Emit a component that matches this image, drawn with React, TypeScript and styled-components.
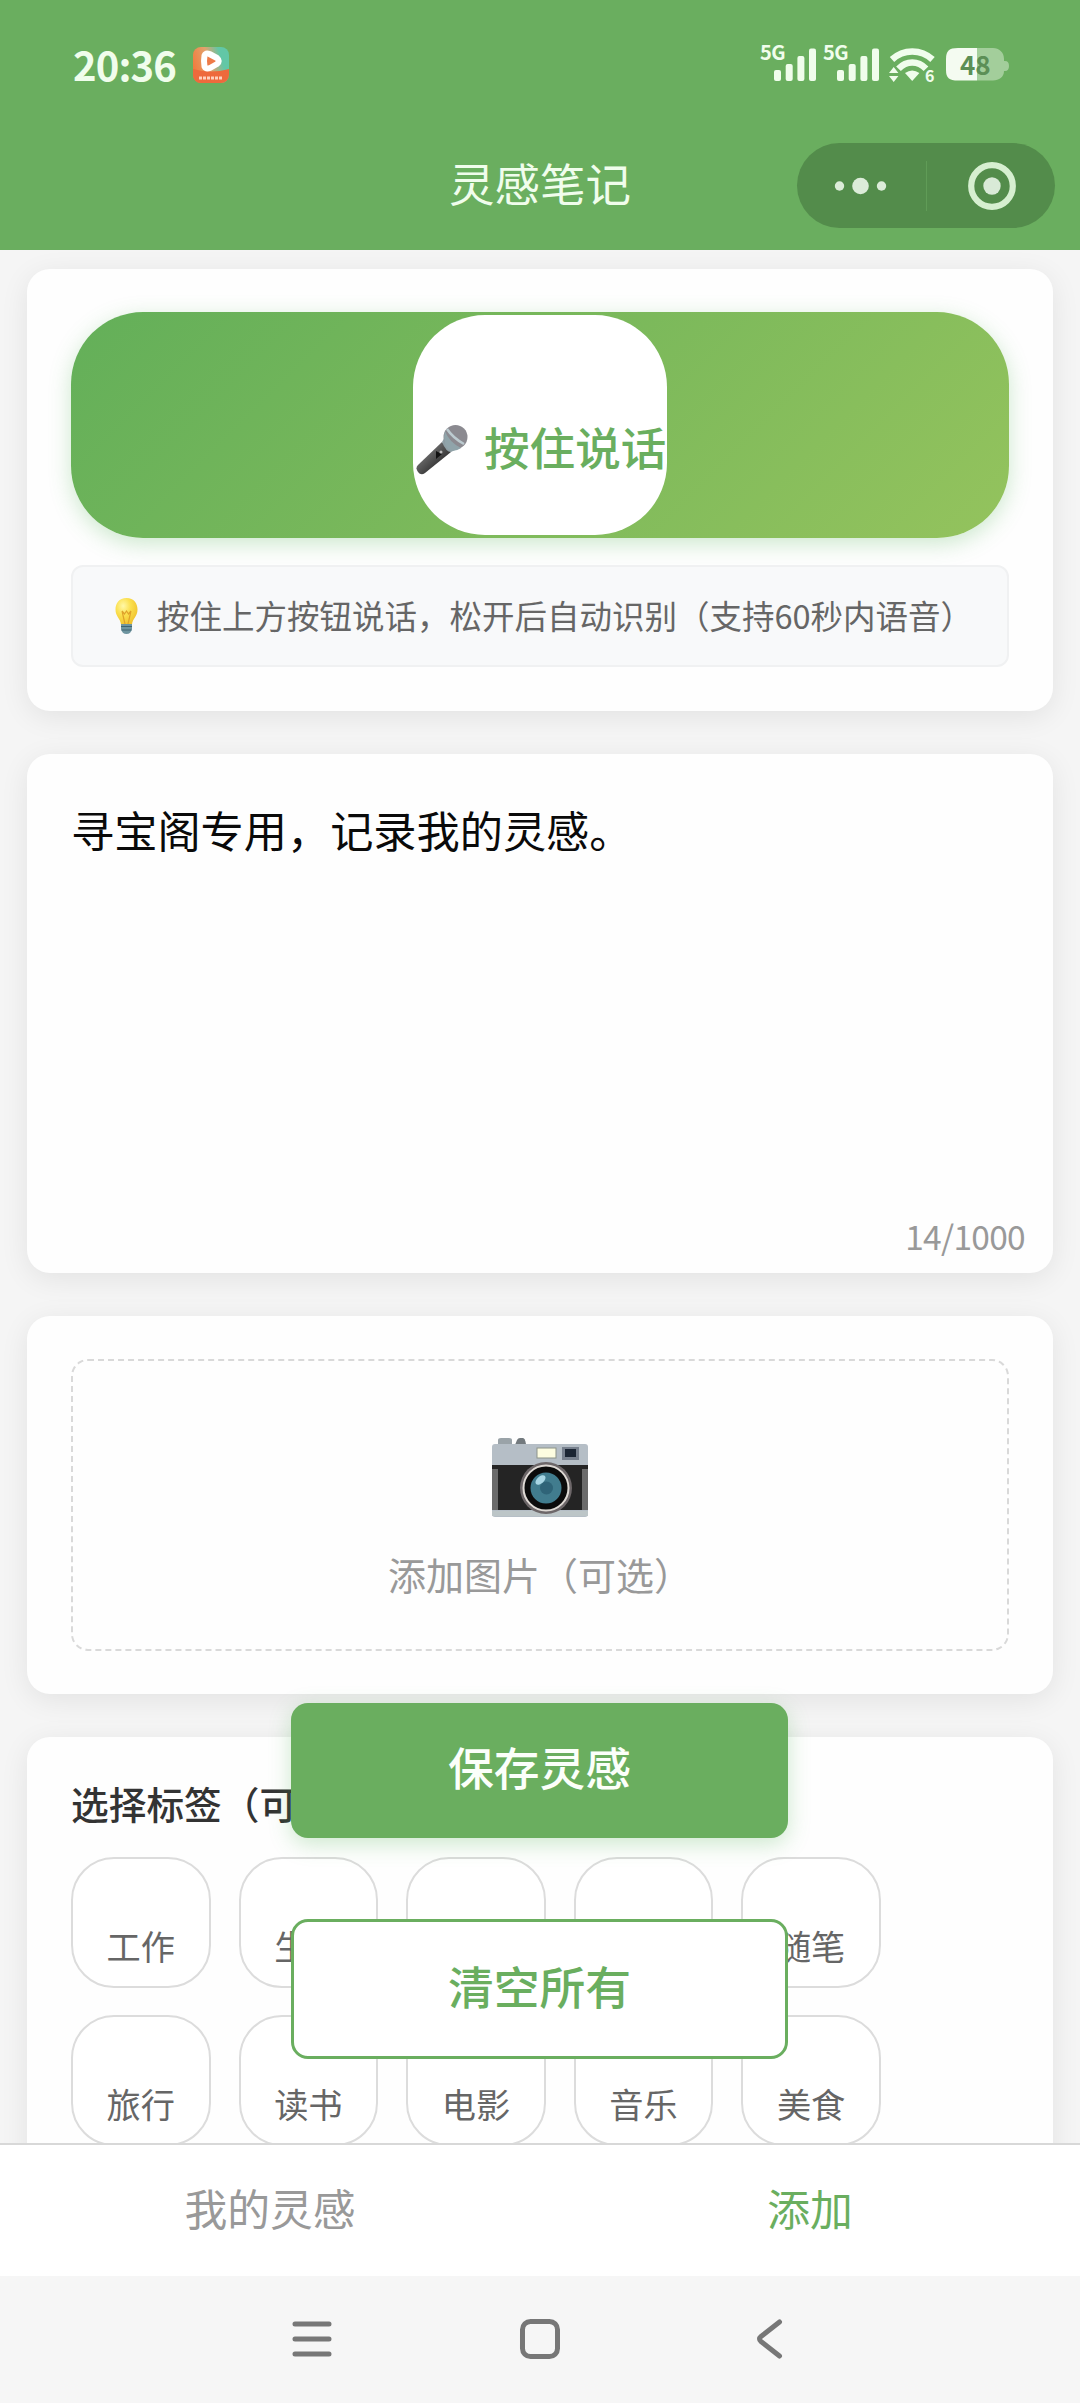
import React from 'react';
import styled, { createGlobalStyle } from 'styled-components';

const GREEN = '#6aae5f';
const TINT = '#f0fdec';

const GlobalStyle = createGlobalStyle`
  * { box-sizing: border-box; }
  body {
    margin: 0;
    background: #f5f5f5;
    font-family: "Noto Sans CJK SC", "Noto Sans", sans-serif;
  }
`;

const Screen = styled.div`
  position: relative;
  display: flex;
  flex-direction: column;
  width: 1080px;
  height: 2403px;
  overflow: hidden;
  background: #f5f5f5;
`;

const Header = styled.header`
  flex: none;
  display: flex;
  flex-direction: column;
  height: 250px;
  background: ${GREEN};
`;

const StatusBar = styled.div`
  display: flex;
  align-items: center;
  height: 130px;
  padding: 0 71px 0 73px;
`;

const Clock = styled.span`
  width: 120px;
  padding-bottom: 3px;
  font-size: 40px;
  font-weight: 700;
  line-height: 60px;
  letter-spacing: -0.9px;
  white-space: nowrap;
  color: ${TINT};
`;

const StatusIcons = styled.div`
  display: flex;
  align-items: flex-start;
  gap: 7px;
  height: 40px;
  margin-left: auto;
`;

const Signal = styled.div`
  display: flex;
  width: 56px;
`;

const SignalLabel = styled.span`
  width: 14px;
  height: 20px;
  margin-top: -3px;
  font-size: 20px;
  font-weight: 700;
  line-height: 20px;
  letter-spacing: -0.6px;
  white-space: nowrap;
  color: ${TINT};
`;

const WifiSvg = styled.svg`
  margin: 0 3px;
  overflow: visible;
`;

const BatteryText = styled.text`
  font-size: 26px;
  font-weight: 700;
  font-family: "Noto Sans CJK SC", sans-serif;
`;

const TitleRow = styled.div`
  display: grid;
  grid-template-columns: 1fr auto 1fr;
  align-items: center;
  height: 111px;
`;

const PageTitle = styled.h1`
  grid-column: 2;
  margin: 0;
  padding-bottom: 7px;
  font-size: 45.5px;
  font-weight: 400;
  line-height: 64px;
  color: ${TINT};
`;

const Capsule = styled.div`
  justify-self: end;
  display: flex;
  align-items: center;
  width: 258px;
  height: 85px;
  margin-right: 25px;
  border-radius: 43px;
  background: #538c4b;
`;

const CapsuleHalf = styled.div`
  flex: 1;
  display: flex;
  align-items: center;
  justify-content: center;
`;

const CapsuleDivider = styled.div`
  width: 1px;
  height: 50px;
  background: #609c57;
`;

const Content = styled.main`
  flex: 1;
  min-height: 0;
  display: flex;
  flex-direction: column;
  gap: 43px;
  padding: 19px 27px 0;
  overflow: hidden;
`;

const Card = styled.section<{ $height: number }>`
  flex: none;
  display: flex;
  flex-direction: column;
  height: ${(p) => p.$height}px;
  padding: 43px 44px;
  border-radius: 23px;
  background: #fefefe;
  box-shadow: 0 6px 29px rgba(0, 0, 0, 0.08);
`;

const VoiceBar = styled.div`
  flex: none;
  display: flex;
  align-items: center;
  justify-content: center;
  height: 226px;
  border-radius: 72px;
  background: linear-gradient(135deg, #63af59, #94c35d);
  box-shadow: 0 6px 22px rgba(76, 175, 80, 0.28);
`;

const VoiceButton = styled.button`
  display: flex;
  align-items: center;
  gap: 16px;
  width: 254px;
  height: 220px;
  padding: 50px 0 0 3px;
  border: 0;
  border-radius: 72px;
  background: #fff;
  color: ${GREEN};
  white-space: nowrap;
`;

const VoiceLabel = styled.span`
  padding-bottom: 9px;
  font: 500 45.6px/60px "Noto Sans CJK SC", sans-serif;
`;

const Hint = styled.div`
  display: flex;
  align-items: center;
  gap: 18px;
  height: 102px;
  margin-top: 27px;
  padding-left: 41px;
  border: 2px solid #f0f1f2;
  border-radius: 12px;
  background: #f8f9fa;
  color: #666;
  white-space: nowrap;
`;

const HintText = styled.span`
  padding-bottom: 3px;
  font-size: 32.5px;
  line-height: 44px;
`;

const NoteText = styled.p`
  flex: 1;
  margin: 0;
  font-size: 43.2px;
  line-height: 64px;
  color: #0a0a0a;
`;

const Counter = styled.span`
  align-self: flex-end;
  margin: 0 -16px -29px 0;
  font-size: 33.5px;
  line-height: 46px;
  letter-spacing: -0.7px;
  color: #999;
`;

const UploadBox = styled.div`
  flex: 1;
  display: flex;
  flex-direction: column;
  align-items: center;
  padding-top: 76px;
  border: 2px dashed #d9d9d9;
  border-radius: 17px;
`;

const UploadLabel = styled.span`
  margin-top: 29px;
  font-size: 38px;
  line-height: 56px;
  color: #999;
`;

const TagTitle = styled.h2`
  margin: -5px 0 26px;
  font-size: 37.7px;
  font-weight: 500;
  line-height: 56px;
  color: #333;
`;

const TagGrid = styled.div`
  display: grid;
  grid-template-columns: repeat(5, 139.5px);
  grid-auto-rows: 131px;
  gap: 27px 28.1px;
`;

const Tag = styled.button`
  display: flex;
  align-items: center;
  justify-content: center;
  padding: 44px 0 0;
  border: 2px solid #dcdcdc;
  border-radius: 43px;
  background: #fff;
  color: #666;
  font: 400 34.2px/50px "Noto Sans CJK SC", sans-serif;
`;

const FloatingActions = styled.div`
  position: absolute;
  top: 1703px;
  left: 291px;
  display: flex;
  flex-direction: column;
  gap: 81px;
  width: 497px;
`;

const ActionButton = styled.button<{ $primary?: boolean }>`
  height: ${(p) => (p.$primary ? 135 : 140)}px;
  padding: 0 0 ${(p) => (p.$primary ? 9 : 8)}px;
  border: ${(p) => (p.$primary ? '0' : `3px solid ${GREEN}`)};
  border-radius: 17px;
  background: ${(p) => (p.$primary ? GREEN : '#fff')};
  box-shadow: ${(p) => (p.$primary ? '0 6px 22px rgba(76, 175, 80, 0.28)' : 'none')};
  color: ${(p) => (p.$primary ? '#fbfffa' : GREEN)};
  font: 500 45.8px/64px "Noto Sans CJK SC", sans-serif;
`;

const TabBar = styled.nav`
  flex: none;
  display: flex;
  height: 133px;
  border-top: 2px solid #d8d8d8;
  background: #fff;
`;

const Tab = styled.a<{ $active?: boolean }>`
  flex: 1;
  display: flex;
  align-items: center;
  justify-content: center;
  padding-bottom: 8px;
  font-size: 42.8px;
  line-height: 60px;
  color: ${(p) => (p.$active ? GREEN : '#999')};
`;

const SystemNav = styled.footer`
  flex: none;
  display: flex;
  align-items: center;
  justify-content: center;
  gap: 180px;
  height: 127px;
  padding-bottom: 2px;
  background: #f6f6f6;
`;

const SignalIcon = () => (
  <Signal>
    <SignalLabel>5G</SignalLabel>
    <svg width="42" height="40" viewBox="0 0 42 40" fill={TINT}>
      <rect x="0" y="25" width="7" height="11" rx="2" />
      <rect x="11.7" y="19" width="7" height="17" rx="2" />
      <rect x="23.4" y="11" width="7" height="25" rx="2" />
      <rect x="35" y="3.5" width="7" height="32.5" rx="2" />
    </svg>
  </Signal>
);

const WifiIcon = () => (
  <WifiSvg width="47" height="40" viewBox="0 0 47 40" fill="none">
    <path d="M3 14.500C14.500 3.800 32 3.800 43.500 14.500" stroke={TINT} strokeWidth="6.500" />
    <path d="M9.500 23.800C17.500 15.500 29 15.500 37 23.800" stroke={TINT} strokeWidth="6.500" />
    <path d="M16 28q7.200-5 14.400 0L23.200 36z" fill={TINT} />
    <path d="M0 28l4.700-6 4.700 6zM0 31l4.700 6 4.700-6z" fill={TINT} />
    <text x="36" y="37" fontSize="16" fontWeight="700" fill={TINT}>6</text>
  </WifiSvg>
);

const BatteryIcon = () => (
  <svg width="63" height="40" viewBox="0 0 63 40">
    <path d="M31 3h16c6 0 11 4 11 11v2h1q4 0 4 5t-4 5h-1c0 6-5 9.500-11 9.500H31z" fill="#a3ce9b" />
    <path d="M31 3H12C3 3 0 6 0 14v11c0 8 3 10.500 12 10.500h19z" fill="#f4fbf1" />
    <BatteryText x="14" y="29.500" fill="#5c8f56">48</BatteryText>
  </svg>
);

const PlayerIcon = () => (
  <svg width="36" height="36" viewBox="0 0 36 36">
    <defs>
      <linearGradient id="player" x1="0" y1="0.6" x2="1" y2="0.3">
        <stop offset="0" stopColor="#f27a3c" />
        <stop offset="0.450" stopColor="#e3a26c" />
        <stop offset="0.800" stopColor="#62c7a6" />
      </linearGradient>
      <clipPath id="playerClip"><rect width="36" height="36" rx="8" /></clipPath>
    </defs>
    <g clipPath="url(#playerClip)">
      <rect width="36" height="36" fill="url(#player)" />
      <path d="M0 22q18 5 36 0v14H0z" fill="#ee6a3c" />
    </g>
    <path d="M11.500 8.500q1.500-3 5-1.500l7.500 4q3.500 3 0 6l-7 4q-4 1.500-5.500-1.500-1-5 0-11z" fill="#ee7b48" stroke="#fff" strokeWidth="6" strokeLinejoin="round" />
    <path d="M6 31h24" stroke="#ffd2bd" strokeWidth="3" strokeDasharray="3 1" />
  </svg>
);

const MicIcon = () => (
  <svg width="52" height="52" viewBox="0 0 52 52">
    <defs>
      <linearGradient id="micBody" x1="0" y1="0" x2="1" y2="1">
        <stop offset="0.300" stopColor="#6d6d6d" />
        <stop offset="0.650" stopColor="#3a3a3a" />
      </linearGradient>
    </defs>
    <path d="M26 18l9 10L9 49q-4 3-7-1t0-7z" fill="url(#micBody)" />
    <path d="M26 18l5-9 14 14-10 5q-5 0-9-10z" fill="#8f9fa5" />
    <circle cx="39.500" cy="13" r="12" fill="#8b8a90" />
    <path d="M29 7q4 11 16 17-7 5-13 1-6-7-3-18z" fill="#90a4aa" />
    <path d="M31 5q6 9 17 15" stroke="#bccbd0" strokeWidth="2.500" fill="none" />
    <path d="M20 27l6 3-6 5z" fill="#111" />
    <circle cx="25" cy="28" r="1.500" fill="#bbb" />
  </svg>
);

const BulbIcon = () => (
  <svg width="25" height="38" viewBox="0 0 25 38">
    <defs>
      <radialGradient id="bulb" cx="0.350" cy="0.300" r="0.750">
        <stop offset="0" stopColor="#fff8a8" />
        <stop offset="0.450" stopColor="#fbe04f" />
        <stop offset="1" stopColor="#efc12c" />
      </radialGradient>
    </defs>
    <path d="M12.500 1C5 1 1.500 6.500 1.500 12.500c0 7 5 9 5.500 15h11c.5-6 5.500-8 5.500-15C23.500 6.500 20 1 12.500 1z" fill="url(#bulb)" />
    <path d="M8 14l3 13M17 14l-3 13M8 14l2.500 3 2-3 2 3L17 14" stroke="#dfa22a" strokeWidth="1.200" fill="none" />
    <path d="M7 27h11v5q-1 5-5.500 5T7 32z" fill="#6e95a0" />
    <path d="M7 29.500h11M7.500 33h10" stroke="#3f6571" strokeWidth="1.200" />
  </svg>
);

const CameraIcon = () => (
  <svg width="96" height="80" viewBox="0 0 96 80">
    <path d="M6 8V3q0-2 3-2h8q3 0 3 2v5z" fill="#9aa3a8" />
    <path d="M23 8l2-5q1-2 3-2h3q2 0 3 6v1z" fill="#737a7e" />
    <path d="M3 7h90q3 0 3 3v67q0 3-3 3H3q-3 0-3-3V10q0-3 3-3z" fill="#b5bec6" />
    <path d="M0 28h96v45H0z" fill="#242424" />
    <path d="M0 32h6v41H0zM90 32h6v41h-6z" fill="#6b6b6b" />
    <rect x="0" y="74" width="96" height="5" fill="#bcc5c7" />
    <rect x="45" y="11" width="19" height="10" fill="#fdfde1" stroke="#8d9389" />
    <rect x="70" y="10" width="17" height="13" fill="#77808d" />
    <rect x="73" y="12" width="11" height="8" fill="#1b2533" />
    <circle cx="54" cy="51" r="26" fill="#6d6769" />
    <circle cx="54" cy="51" r="22.500" fill="#0b0b0b" stroke="#ded9d4" strokeWidth="2" />
    <circle cx="54" cy="51" r="15.500" fill="#417c8e" />
    <circle cx="54.500" cy="51" r="6.500" fill="#2f6478" />
    <ellipse cx="48.500" cy="43" rx="6" ry="3.500" fill="#a8d6e4" transform="rotate(-42 48.500 43)" />
  </svg>
);

const tags = ['工作', '生活', '学习', '创意', '随笔', '旅行', '读书', '电影', '音乐', '美食'];

export default function App() {
  return (
    <>
      <GlobalStyle />
      <Screen>
        <Header>
          <StatusBar>
            <Clock>20:36</Clock>
            <PlayerIcon />
            <StatusIcons>
              <SignalIcon />
              <SignalIcon />
              <WifiIcon />
              <BatteryIcon />
            </StatusIcons>
          </StatusBar>
          <TitleRow>
            <PageTitle>灵感笔记</PageTitle>
            <Capsule>
              <CapsuleHalf>
                <svg width="54" height="18" viewBox="0 0 54 18" fill="#dcecd9">
                  <circle cx="5.500" cy="9" r="4.700" />
                  <circle cx="26.500" cy="9" r="8.300" />
                  <circle cx="47.500" cy="9" r="4.700" />
                </svg>
              </CapsuleHalf>
              <CapsuleDivider />
              <CapsuleHalf>
                <svg width="50" height="50" viewBox="0 0 50 50">
                  <circle cx="26" cy="25" r="20.800" fill="none" stroke="#d6efd0" strokeWidth="6.200" />
                  <circle cx="26" cy="25" r="8.700" fill="#d9ead7" />
                </svg>
              </CapsuleHalf>
            </Capsule>
          </TitleRow>
        </Header>

        <Content>
          <Card $height={442}>
            <VoiceBar>
              <VoiceButton>
                <MicIcon />
                <VoiceLabel>按住说话</VoiceLabel>
              </VoiceButton>
            </VoiceBar>
            <Hint>
              <BulbIcon />
              <HintText>按住上方按钮说话，松开后自动识别（支持60秒内语音）</HintText>
            </Hint>
          </Card>

          <Card $height={519}>
            <NoteText>寻宝阁专用，记录我的灵感。</NoteText>
            <Counter>14/1000</Counter>
          </Card>

          <Card $height={378}>
            <UploadBox>
              <CameraIcon />
              <UploadLabel>添加图片（可选）</UploadLabel>
            </UploadBox>
          </Card>

          <Card $height={460}>
            <TagTitle>选择标签（可选）</TagTitle>
            <TagGrid>
              {tags.map((tag) => (
                <Tag key={tag}>{tag}</Tag>
              ))}
            </TagGrid>
          </Card>
        </Content>

        <FloatingActions>
          <ActionButton $primary>保存灵感</ActionButton>
          <ActionButton>清空所有</ActionButton>
        </FloatingActions>

        <TabBar>
          <Tab>我的灵感</Tab>
          <Tab $active>添加</Tab>
        </TabBar>

        <SystemNav>
          <svg width="48" height="48" viewBox="0 0 48 48" stroke="#777" strokeWidth="5" strokeLinecap="round">
            <path d="M7 9h34M7 24h34M7 39h34" />
          </svg>
          <svg width="48" height="48" viewBox="0 0 48 48" fill="none" stroke="#777" strokeWidth="5">
            <rect x="6.500" y="6.500" width="35" height="35" rx="8" />
          </svg>
          <svg width="48" height="48" viewBox="0 0 48 48" fill="none" stroke="#777" strokeWidth="5" strokeLinecap="round" strokeLinejoin="round">
            <path d="M35.500 7L17 21.500q-3 2.500 0 5L35.500 41" />
          </svg>
        </SystemNav>
      </Screen>
    </>
  );
}
